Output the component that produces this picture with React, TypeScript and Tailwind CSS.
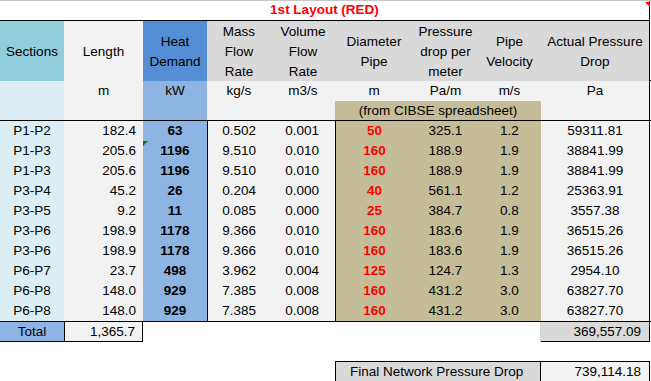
const cols = "grid grid-cols-[64px_79px_64px_64px_64px_78px_65px_63px_109px]";

type Row = {
  section: string;
  length: string;
  heat: string;
  mass: string;
  volume: string;
  diameter: string;
  perMeter: string;
  velocity: string;
  actual: string;
};

const rows: Row[] = [
  { section: "P1-P2", length: "182.4", heat: "63", mass: "0.502", volume: "0.001", diameter: "50", perMeter: "325.1", velocity: "1.2", actual: "59311.81" },
  { section: "P1-P3", length: "205.6", heat: "1196", mass: "9.510", volume: "0.010", diameter: "160", perMeter: "188.9", velocity: "1.9", actual: "38841.99" },
  { section: "P1-P3", length: "205.6", heat: "1196", mass: "9.510", volume: "0.010", diameter: "160", perMeter: "188.9", velocity: "1.9", actual: "38841.99" },
  { section: "P3-P4", length: "45.2", heat: "26", mass: "0.204", volume: "0.000", diameter: "40", perMeter: "561.1", velocity: "1.2", actual: "25363.91" },
  { section: "P3-P5", length: "9.2", heat: "11", mass: "0.085", volume: "0.000", diameter: "25", perMeter: "384.7", velocity: "0.8", actual: "3557.38" },
  { section: "P3-P6", length: "198.9", heat: "1178", mass: "9.366", volume: "0.010", diameter: "160", perMeter: "183.6", velocity: "1.9", actual: "36515.26" },
  { section: "P3-P6", length: "198.9", heat: "1178", mass: "9.366", volume: "0.010", diameter: "160", perMeter: "183.6", velocity: "1.9", actual: "36515.26" },
  { section: "P6-P7", length: "23.7", heat: "498", mass: "3.962", volume: "0.004", diameter: "125", perMeter: "124.7", velocity: "1.3", actual: "2954.10" },
  { section: "P6-P8", length: "148.0", heat: "929", mass: "7.385", volume: "0.008", diameter: "160", perMeter: "431.2", velocity: "3.0", actual: "63827.70" },
  { section: "P6-P8", length: "148.0", heat: "929", mass: "7.385", volume: "0.008", diameter: "160", perMeter: "431.2", velocity: "3.0", actual: "63827.70" },
];

const Head = ({ lines, bg }: { lines: string[]; bg: string }) => (
  <div className={`${bg} flex flex-col items-center justify-center leading-[20px] pt-[1px]`}>
    {lines.map((l) => (
      <span key={l}>{l}</span>
    ))}
  </div>
);

export default function App() {
  return (
    <div className="w-[651px] h-[381px] bg-white text-black text-[13.5px] font-['Liberation_Sans',Arial,sans-serif] border-t border-[#c8c8c8] relative">
      {/* comment marker */}
      <div className="absolute right-[1px] top-[1px] w-0 h-0 border-l-[5px] border-l-transparent border-t-[5px] border-t-[#ff0000]" />

      <div className="w-[651px]">
        {/* Title */}
        <div className="w-[650px] h-[20px] border-b border-black border-r border-r-black flex items-center justify-center font-bold text-[#ff0000]">
          1st Layout (RED)
        </div>

        {/* Header */}
        <div className={`${cols} w-[651px] h-[60px] border-b border-black`}>
          <Head lines={["Sections"]} bg="bg-[#92cddc]" />
          <Head lines={["Length"]} bg="bg-[#f2f2f2]" />
          <Head lines={["Heat", "Demand"]} bg="bg-[#558ed5]" />
          <Head lines={["Mass", "Flow", "Rate"]} bg="bg-[#d9d9d9]" />
          <Head lines={["Volume", "Flow", "Rate"]} bg="bg-[#d9d9d9]" />
          <Head lines={["Diameter", "Pipe"]} bg="bg-[#d9d9d9]" />
          <Head lines={["Pressure", "drop per", "meter"]} bg="bg-[#d9d9d9]" />
          <Head lines={["Pipe", "Velocity"]} bg="bg-[#d9d9d9]" />
          <div className="bg-[#d9d9d9] border-r border-black flex flex-col items-center justify-center leading-[20px] pt-[1px]">
            <span>Actual Pressure</span>
            <span>Drop</span>
          </div>
        </div>

        {/* Units */}
        <div className={`${cols} w-[651px] h-[40px] border-b border-black grid-rows-[20px_19px] leading-[20px] text-center`}>
          <div className="row-span-2 bg-[#daeef3]" />
          <div className="row-span-2 bg-[#f2f2f2]">m</div>
          <div className="row-span-2 bg-[#8db4e2]">kW</div>
          <div className="bg-[#f2f2f2]">kg/s</div>
          <div className="bg-[#f2f2f2]">m3/s</div>
          <div className="bg-[#f2f2f2]">m</div>
          <div className="bg-[#f2f2f2]">Pa/m</div>
          <div className="bg-[#f2f2f2]">m/s</div>
          <div className="row-span-2 bg-[#f2f2f2] border-r border-black">Pa</div>
          <div className="bg-[#f2f2f2]" />
          <div className="bg-[#f2f2f2]" />
          <div className="col-span-3 bg-[#c4bd97]">(from CIBSE spreadsheet)</div>
        </div>

        {/* Data */}
        <div className="w-[651px] border-b border-black">
          {rows.map((r, i) => (
            <div key={i} className={`${cols} h-[20px] leading-[20px]`}>
              <div className="bg-[#daeef3] text-center">{r.section}</div>
              <div className="bg-[#f2f2f2] text-right pr-[7px]">{r.length}</div>
              <div className="bg-[#8db4e2] text-center font-bold relative">
                {i === 1 && (
                  <div className="absolute left-0 top-0 w-0 h-0 border-t-[5px] border-t-[#008000] border-r-[5px] border-r-transparent" />
                )}
                {r.heat}
              </div>
              <div className="bg-[#f2f2f2] border-l border-black text-right pr-[15px]">{r.mass}</div>
              <div className="bg-[#f2f2f2] text-right pr-[16px]">{r.volume}</div>
              <div className="bg-[#c4bd97] border-l border-black text-center font-bold text-[#ff0000]">{r.diameter}</div>
              <div className="bg-[#c4bd97] text-center">{r.perMeter}</div>
              <div className="bg-[#c4bd97] text-center">{r.velocity}</div>
              <div className="bg-[#f2f2f2] border-r border-black text-center">{r.actual}</div>
            </div>
          ))}
        </div>

        {/* Totals */}
        <div className={`${cols} h-[20px] leading-[19px]`}>
          <div className="bg-[#8db4e2] border-b border-black text-center">Total</div>
          <div className="bg-[#f2f2f2] border-x border-b border-black text-right pr-[7px]">1,365.7</div>
          <div className="col-span-5" />
          <div className="border-r border-[#d4d4d4]" />
          <div className="bg-[#d9d9d9] border-r border-b border-black text-right pr-[8px]">369,557.09</div>
        </div>

        <div className="h-[19px]" />

        {/* Final */}
        <div className={`${cols} h-[21px] leading-[19px]`}>
          <div className="col-span-2" />
          <div className="col-span-3 border-b border-[#d4d4d4] ml-[26px]" />
          <div className="col-span-3 bg-[#d9d9d9] border border-black pl-[14px]">Final Network Pressure Drop</div>
          <div className="bg-[#f2f2f2] border-y border-r border-black text-right pr-[8px]">739,114.18</div>
        </div>
      </div>
    </div>
  );
}
